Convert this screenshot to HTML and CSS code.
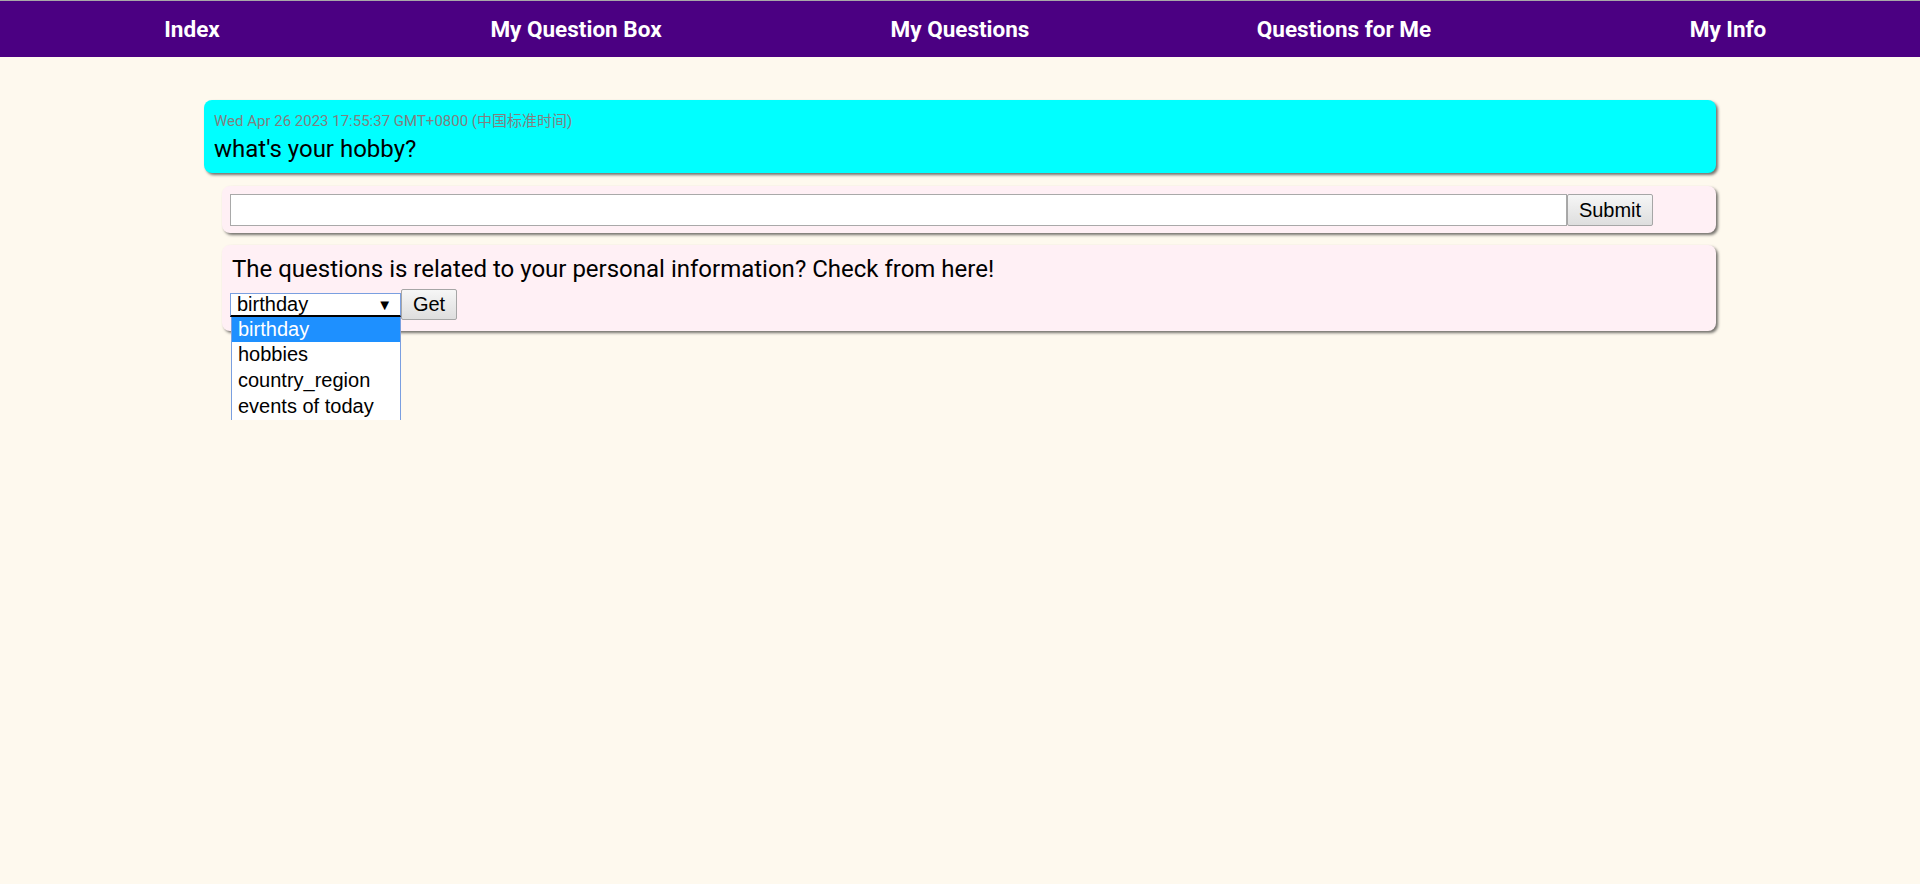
FILE: index.html
```html
<!DOCTYPE html>
<html lang="en">
<head>
<meta charset="utf-8">
<title>Question</title>
<link rel="stylesheet" href="styles.css">
</head>
<body>
<nav class="nav">
  <a class="nav-item" href="#">Index</a>
  <a class="nav-item" href="#">My Question Box</a>
  <a class="nav-item" href="#">My Questions</a>
  <a class="nav-item" href="#">Questions for Me</a>
  <a class="nav-item" href="#">My Info</a>
</nav>
<main class="main">
  <section class="card card-question">
    <div class="time">Wed Apr 26 2023 17:55:37 GMT+0800 (中国标准时间)</div>
    <div class="question">what's your hobby?</div>
  </section>
  <section class="card card-sub card-answer">
    <input class="answer-input" type="text">
    <button class="btn btn-submit" type="button">Submit</button>
  </section>
  <section class="card card-sub card-info">
    <div class="info-text">The questions is related to your personal information? Check from here!</div>
    <div class="info-row">
      <div class="select-wrap">
        <div class="select">
          <span class="select-value">birthday</span>
          <span class="select-arrow">▼</span>
        </div>
        <ul class="dropdown">
          <li class="option option-active">birthday</li>
          <li class="option">hobbies</li>
          <li class="option">country_region</li>
          <li class="option">events of today</li>
        </ul>
      </div>
      <button class="btn btn-get" type="button">Get</button>
    </div>
  </section>
</main>
</body>
</html>
```
FILE: styles.css
```css
* { box-sizing: border-box; }
html, body { margin: 0; padding: 0; }
body {
  background: #fef9ee;
  font-family: Roboto, "Noto Sans CJK SC", sans-serif;
  height: 884px;
  overflow: hidden;
}
.nav {
  display: flex;
  background: #4b0082;
  border-top: 1px solid #a8a8a8;
  height: 57px;
}
.nav-item {
  flex: 1;
  text-align: center;
  color: #fff;
  text-decoration: none;
  font-family: Roboto, sans-serif;
  font-weight: 700;
  font-size: 22.5px;
  line-height: 56px;
}
.main {
  width: 1512px;
  margin: 43px auto 0;
}
.card {
  border-radius: 8px;
  box-shadow: 2px 2px 3px rgba(0, 0, 0, 0.55);
}
.card-question {
  background: #00ffff;
  padding: 12px 10px 10px;
}
.time {
  font-size: 15px;
  line-height: 18px;
  color: #808080;
  font-family: Roboto, "Noto Sans CJK SC", sans-serif;
}
.question {
  margin-top: 5px;
  font-size: 24px;
  line-height: 28px;
  color: #000;
}
.card-sub {
  background: #fff0f5;
  margin-left: 18px;
}
.card-answer {
  margin-top: 13px;
  display: flex;
  padding: 8px 8px 7px;
}
.answer-input {
  width: 1337px;
  height: 32px;
  margin: 0;
  border: 1px solid #a9a9a9;
  background: #fff;
  font-size: 20px;
  font-family: "Liberation Sans", Arial, sans-serif;
  padding: 0 4px;
  outline: none;
}
.btn {
  margin: 0;
  font-family: "Liberation Sans", Arial, sans-serif;
  font-size: 20px;
  color: #000;
  background: linear-gradient(#f6f6f6, #dedede);
  border: 1px solid #a6a6a6;
  border-radius: 2px;
  padding: 0;
}
.btn-submit {
  width: 86px;
  height: 32px;
}
.card-info {
  margin-top: 12px;
  padding: 10px 8px 11px;
}
.info-text {
  font-size: 24px;
  line-height: 28px;
  padding-left: 2px;
  color: #000;
}
.info-row {
  display: flex;
  align-items: center;
  margin-top: 6px;
  height: 31px;
}
.select-wrap {
  position: relative;
  width: 171px;
  height: 24px;
}
.select {
  display: flex;
  align-items: center;
  justify-content: space-between;
  height: 24px;
  border: 1px solid #7a9fe0;
  border-bottom: 2px solid #000;
  background: #fff;
  padding: 0 8px 0 6px;
  font-family: "Liberation Sans", Arial, sans-serif;
  font-size: 20px;
  line-height: 21px;
}
.select-arrow {
  font-size: 15px;
  line-height: 21px;
}
.dropdown {
  position: absolute;
  top: 24px;
  left: 1px;
  width: 170px;
  margin: 0;
  padding: 0;
  list-style: none;
  background: #fff;
  border-left: 1px solid #7a9fe0;
  border-right: 1px solid #7a9fe0;
  font-family: "Liberation Sans", Arial, sans-serif;
  font-size: 20px;
  z-index: 5;
}
.option {
  height: 25.75px;
  line-height: 25px;
  padding-left: 6px;
  color: #000;
  white-space: nowrap;
}
.option-active {
  background: #1e90ff;
  color: #fff;
}
.btn-get {
  width: 56px;
  height: 31px;
}
```
